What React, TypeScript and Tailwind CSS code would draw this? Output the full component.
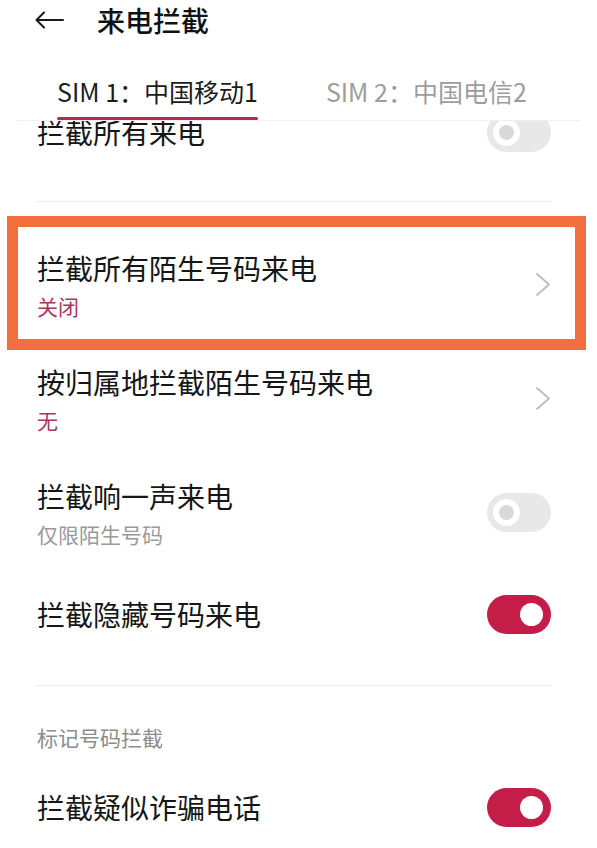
import { ReactNode } from 'react';

const FONT = "font-['Noto_Sans_CJK_SC','Noto_Sans',sans-serif]";

function Toggle({ on }: { on: boolean }) {
  if (on) {
    return (
      <div className="w-[64px] h-[39px] rounded-full bg-[#c41d48] flex items-center justify-end pr-[8px] shrink-0">
        <div className="w-[23px] h-[23px] rounded-full bg-white" />
      </div>
    );
  }
  return (
    <div className="w-[64px] h-[39px] rounded-full bg-[#e8e8e8] flex items-center pl-[6px] shrink-0">
      <div className="w-[27px] h-[27px] rounded-full bg-white flex items-center justify-center">
        <div className="w-[15px] h-[15px] rounded-full bg-[#d9d9d9]" />
      </div>
    </div>
  );
}

function Chevron() {
  return (
    <svg width="16" height="25" viewBox="0 0 16 25" className="shrink-0">
      <polyline points="2,2 14,12.5 2,23" fill="none" stroke="#bcbcbc" strokeWidth="1.8" strokeLinejoin="round" strokeLinecap="round" />
    </svg>
  );
}

function Row({
  title,
  sub,
  subColor = 'text-[#a93560]',
  right,
  className = '',
}: {
  title: string;
  sub?: string;
  subColor?: string;
  right: ReactNode;
  className?: string;
}) {
  return (
    <div
      className={`flex items-center justify-between pl-[37px] pr-[46px] ${
        sub ? 'h-[114px] pb-[5px]' : 'h-[84px]'
      } ${className}`}
    >
      <div className="flex flex-col">
        <span className="text-[28px] leading-[32px] text-[#161616]">{title}</span>
        {sub && <span className={`mt-[10px] text-[21px] leading-[24px] ${subColor}`}>{sub}</span>}
      </div>
      {right}
    </div>
  );
}

function Divider({ className = '' }: { className?: string }) {
  return <div className={`h-px bg-[#ececec] ml-[36px] mr-[46px] ${className}`} />;
}

export default function App() {
  return (
    <div className={`relative w-[597px] h-[848px] bg-white overflow-hidden flex flex-col ${FONT}`}>
      {/* header */}
      <div className="h-[40px] flex items-center pl-[35px] shrink-0">
        <svg width="29" height="18" viewBox="0 0 29 18">
          <path d="M28 9H2M9 1.5L1.5 9L9 16.5" fill="none" stroke="#1a1a1a" strokeWidth="2" strokeLinecap="round" strokeLinejoin="round" />
        </svg>
        <span className="ml-[33px] text-[28px] leading-[36px] font-medium text-[#111]">来电拦截</span>
      </div>

      {/* tabs */}
      <div className="mx-[17px] border-b border-[#efefef] pt-[36px] flex shrink-0">
        <div className="ml-[40px] flex flex-col">
          <span className="text-[25px] leading-[30px] text-[#1c1c1c] whitespace-nowrap">SIM 1：中国移动1</span>
          <div className="mt-[11px] h-[3px] bg-[#b7294f] rounded-full" />
        </div>
        <span className="ml-[68px] text-[25px] leading-[30px] text-[#9d9d9d] whitespace-nowrap">SIM 2：中国电信2</span>
      </div>

      {/* list, scrolled so the first row sits under the tabs */}
      <div className="flex-1 overflow-hidden">
        <Row title="拦截所有来电" right={<Toggle on={false} />} className="-mt-[31px]" />
        <Divider className="mt-[27px] mb-[28px]" />
        <Row title="拦截所有陌生号码来电" sub="关闭" right={<Chevron />} />
        <Row title="按归属地拦截陌生号码来电" sub="无" right={<Chevron />} />
        <Row title="拦截响一声来电" sub="仅限陌生号码" subColor="text-[#9a9a9a]" right={<Toggle on={false} />} />
        <Row title="拦截隐藏号码来电" right={<Toggle on />} />
        <Divider className="mt-[29px]" />
        <div className="h-[79px] pt-[41px] pl-[37px] text-[21px] leading-[20px] text-[#8c8c8c]">标记号码拦截</div>
        <Row title="拦截疑似诈骗电话" right={<Toggle on />} />
      </div>

      {/* highlight annotation */}
      <div className="absolute left-[7px] top-[216px] w-[579px] h-[134px] border-[11px] border-[#f36f3e] pointer-events-none" />
    </div>
  );
}
